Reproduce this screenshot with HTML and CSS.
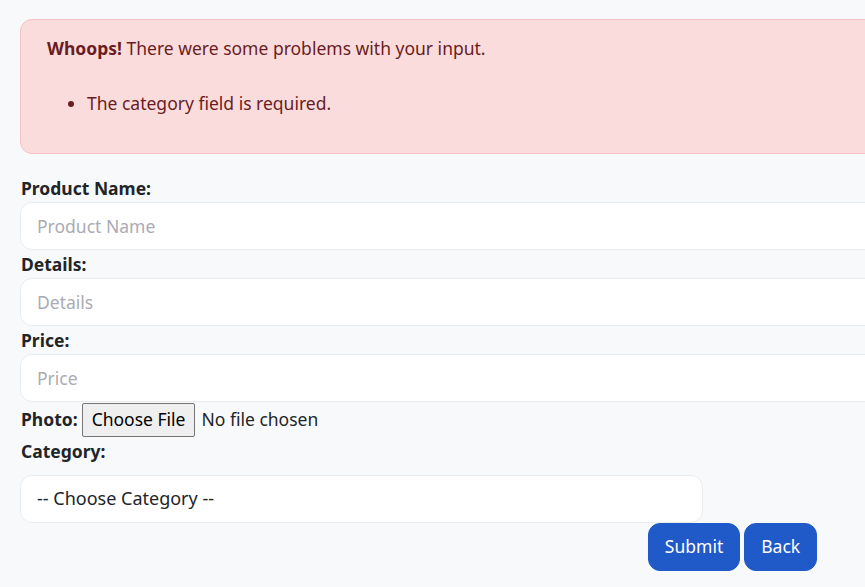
FILE: index.html
```html
<!DOCTYPE html>
<html lang="en">
<head>
<meta charset="utf-8">
<title>Create Product</title>
<link rel="stylesheet" href="styles.css">
</head>
<body>
<div class="page">
  <div class="alert">
    <strong>Whoops!</strong> There were some problems with your input.<br><br>
    <ul>
      <li>The category field is required.</li>
    </ul>
  </div>
  <form class="form">
    <label class="label">Product Name:</label>
    <input class="control" type="text" placeholder="Product Name">
    <label class="label">Details:</label>
    <input class="control" type="text" placeholder="Details">
    <label class="label">Price:</label>
    <input class="control" type="text" placeholder="Price">
    <div class="photo-row"><strong>Photo:</strong> <input class="file" type="file"></div>
    <label class="label label-cat">Category:</label>
    <select class="control select">
      <option>-- Choose Category --</option>
    </select>
    <div class="actions">
      <button type="button" class="btn">Submit</button>
      <button type="button" class="btn">Back</button>
    </div>
  </form>
</div>
</body>
</html>
```

FILE: styles.css
```css
html, body {
  margin: 0;
  padding: 0;
  overflow: hidden;
  background: #f8f9fa;
}
body {
  font-family: "Noto Sans", "Open Sans", sans-serif;
  font-size: 17.5px;
  line-height: 27.5px;
  color: #212529;
}
.page {
  width: 1425px;
  padding: 19px 0 0 20px;
}
.alert {
  box-sizing: border-box;
  height: 135px;
  background: #fadcdd;
  border: 1px solid #f5c2c7;
  border-radius: 12px;
  color: #6b1c22;
  padding: 15px 26px 0;
  margin-bottom: 20px;
}
.alert strong { font-weight: 700; }
.alert ul {
  margin: 0;
  padding-left: 40px;
}
.form {
  display: flex;
  flex-direction: column;
  align-items: stretch;
}
.label {
  display: block;
  font-weight: 700;
  line-height: 28px;
  height: 28px;
  padding-left: 1px;
}
.control {
  display: block;
  box-sizing: border-box;
  height: 48px;
  padding: 0 16px;
  font: inherit;
  color: #212529;
  background: #fff;
  border: 1px solid #e9ecef;
  border-radius: 12px;
  outline: none;
}
.control::placeholder { color: #aaabb4; }
.photo-row {
  display: flex;
  align-items: center;
  gap: 4px;
  padding-left: 1px;
  height: 35px;
}
.file {
  font: inherit;
  color: #212529;
}
.file::file-selector-button {
  font: inherit;
  height: 34px;
  padding: 0 9px;
  margin-right: 6px;
  background: #efefef;
  border: 1px solid #767676;
  border-radius: 2px;
  color: #000;
}
.label-cat { margin-bottom: 10px; }
.select {
  width: 683px;
  font-size: 18px;
  appearance: none;
  -webkit-appearance: none;
}
.actions {
  display: flex;
  justify-content: center;
  gap: 4px;
}
.btn {
  font: inherit;
  color: #fff;
  background: #2059c8;
  border: 1px solid #2059c8;
  border-radius: 12px;
  height: 48px;
  padding: 0 16px;
}
```
